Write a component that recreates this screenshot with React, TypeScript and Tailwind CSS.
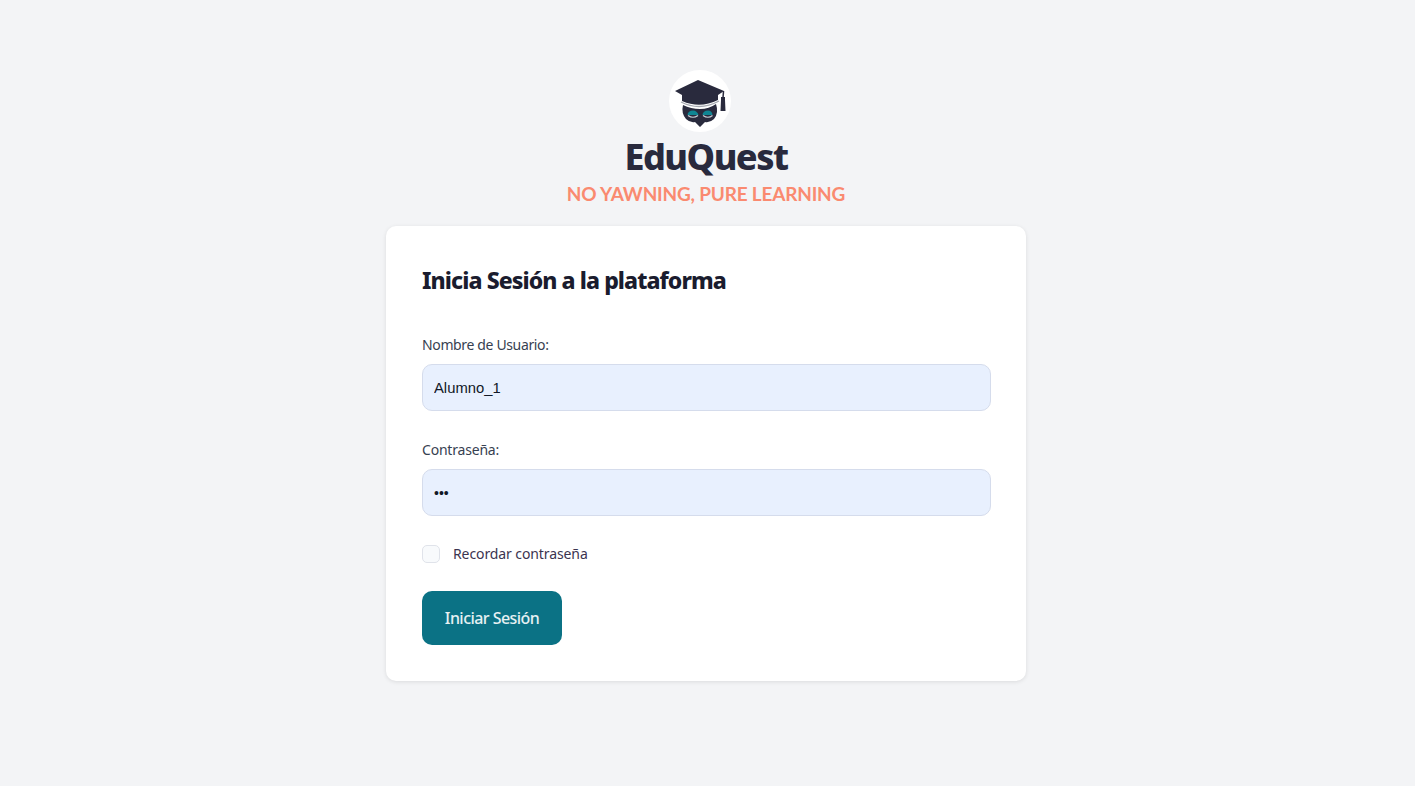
export default function App() {
  return (
    <div className="min-h-[786px] bg-[#f3f4f6] flex flex-col items-center pr-[3px] pt-[70px] font-['Noto_Sans',sans-serif]">
      <div className="mr-[12px] w-[62px] h-[62px] rounded-full bg-white">
        <svg width="62" height="62" viewBox="0 0 62 62">
          <path d="M29 10 L6 21 L13 25 L13 31 Q31 39 49 30 L49 25 L55 21 Z" fill="#292a3d" />
          <path d="M12 32 Q31 41.5 50 31" stroke="#a5a8b0" strokeWidth="1.3" fill="none" />
          <path d="M54.5 21 L54 28" stroke="#292a3d" strokeWidth="1.5" />
          <path d="M52 27 h4 v3 l0.5 11 h-5 l0.5 -11 z" fill="#292a3d" />
          <path d="M14 35 Q22 39 31 39 Q40 39 47 34 Q50 43 45 49 Q41 53 36 52 L31 57 L26 52 Q21 53 17 49 Q12 43 14 35 Z" fill="#292a3d" />
          <path d="M18.5 45 Q19 40.5 24 40.5 Q28 40.5 29.5 45 Z" fill="#0f8593" />
          <path d="M33.5 45 Q34 40.5 39 40.5 Q43 40.5 43.5 45 Z" fill="#0f8593" />
          <path d="M19 45.5 Q24 49 29 45.5" stroke="#c9ced6" strokeWidth="1.2" fill="none" />
          <path d="M34 45.5 Q39 49 43.5 45.5" stroke="#c9ced6" strokeWidth="1.2" fill="none" />
        </svg>
      </div>
      <h1 className="mt-[3px] text-[36px] leading-[44px] font-extrabold tracking-[-1.5px] text-[#292a3d]">EduQuest</h1>
      <p className="mt-[1px] text-[19px] leading-[28px] font-bold text-[#fa8a70] font-['Lato',sans-serif] tracking-[-0.2px]">NO YAWNING, PURE LEARNING</p>
      <div className="mt-[18px] w-[640px] h-[455px] bg-white rounded-[10px] shadow-[0_1px_4px_rgba(0,0,0,0.1)] px-[36px] pt-[38px]">
        <h2 className="text-[23px] leading-[32px] font-extrabold tracking-[-0.92px] text-[#1a1c2e]">Inicia Sesión a la plataforma</h2>
        <label className="block mt-[39px] text-[14px] leading-[20px] tracking-[-0.36px] text-[#374151]">Nombre de Usuario:</label>
        <input readOnly value="Alumno_1" className="mt-[9px] block w-[569px] h-[47px] rounded-[10px] border border-[#d5dcec] bg-[#e8f0fe] px-[11px] text-[14.8px] text-[#111827] font-['Liberation_Sans',sans-serif] outline-none" />
        <label className="block mt-[29px] text-[14px] leading-[20px] tracking-[-0.2px] text-[#374151]">Contraseña:</label>
        <input readOnly type="password" value="123" className="mt-[9px] block w-[569px] h-[47px] rounded-[10px] border border-[#d5dcec] bg-[#e8f0fe] px-[11px] text-[14px] text-[#111827] font-['Liberation_Sans',sans-serif] outline-none" />
        <div className="mt-[28px] flex items-center">
          <span className="w-[18px] h-[18px] rounded-[5px] border border-[#e0e3ea] bg-[#f8fafc]" />
          <span className="ml-[13px] text-[14px] leading-[20px] tracking-[-0.1px] text-[#3b3450]">Recordar contraseña</span>
        </div>
        <button className="mt-[27px] block w-[140px] h-[54px] rounded-[10px] bg-[#0b7285] text-white/90 text-[16px] font-medium tracking-[-0.55px]">Iniciar Sesión</button>
      </div>
    </div>
  );
}
